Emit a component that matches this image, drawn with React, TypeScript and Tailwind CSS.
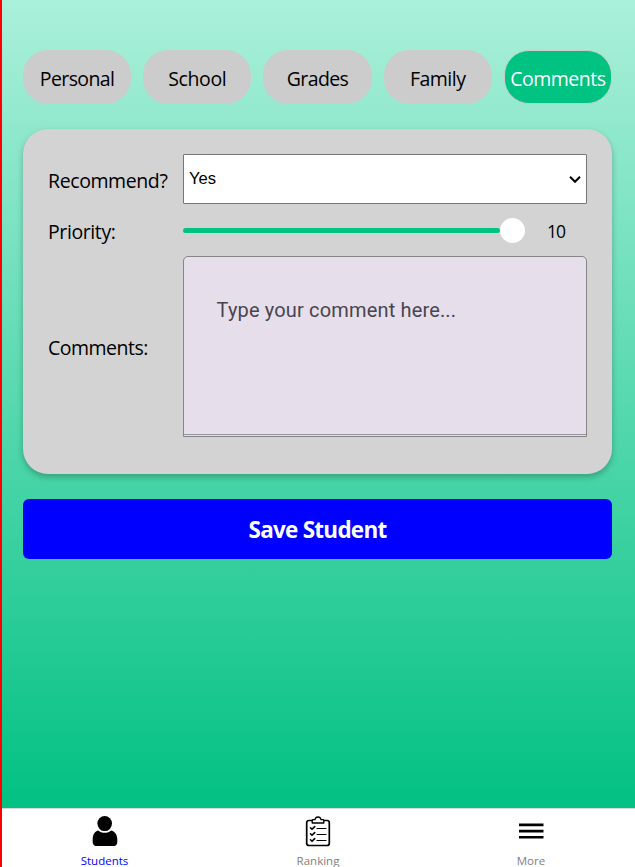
import { useState } from "react";

const tabs = [
  { name: "Personal", tracking: "tracking-[-0.6px]" },
  { name: "School", tracking: "tracking-[-0.35px]" },
  { name: "Grades", tracking: "tracking-[-0.6px]" },
  { name: "Family", tracking: "tracking-[-0.5px]" },
  { name: "Comments", tracking: "tracking-[-0.5px]" },
];

function PersonIcon() {
  return (
    <svg width="26" height="32" viewBox="0 0 26 32" fill="#000">
      <ellipse cx="12.7" cy="8.6" rx="7.3" ry="7.5" />
      <path d="M6.2 15.400c3.600 3.200 9.400 3.200 13 0 4.100 1.100 6.100 4.500 6.100 9.200v2.300c0 2.700-1.500 4.200-4.300 4.200H5c-2.800 0-4.300-1.500-4.300-4.200V24.600c0-4.700 1.500-8.100 5.500-9.200z" />
    </svg>
  );
}

function ClipboardIcon() {
  return (
    <svg width="26" height="32" viewBox="0 0 26 32" fill="none" stroke="#000" strokeLinejoin="round" strokeLinecap="round">
      <path d="M7 5.500H4Q1.700 5.500 1.700 7.800V28.200Q1.700 30.500 4 30.500H22Q24.300 30.500 24.300 28.200V7.800Q24.300 5.500 22 5.500H19" strokeWidth="1.700" />
      <path d="M7.200 8V5.500Q7.200 4.700 8 4.700H10Q10.500 2 13 2T16 4.700H18Q18.800 4.700 18.800 5.500V8Z" strokeWidth="1.300" />
      <path d="M5.500 12.800l1.500 1.500 2.700-2.700M5.500 18.800l1.500 1.500 2.700-2.700M5.500 24.800l1.500 1.500 2.700-2.700" strokeWidth="1.600" />
      <path d="M12 13.500h9M12 19.500h9M12 25.500h9" strokeWidth="1.200" />
    </svg>
  );
}

function MenuIcon() {
  return (
    <svg width="26" height="32" viewBox="0 0 26 32" fill="#000">
      <path d="M1 8.500h24.500v2.700H1zM1 14.700h24.500v2.700H1zM1 20.900h24.500v2.700H1z" />
    </svg>
  );
}

const navItems = [
  { name: "Students", icon: <PersonIcon />, color: "text-[#0000ff]" },
  { name: "Ranking", icon: <ClipboardIcon />, color: "text-[#808080]" },
  { name: "More", icon: <MenuIcon />, color: "text-[#808080]" },
];

const label = "self-center text-[19.5px] leading-[26px]";

export default function App() {
  const [active, setActive] = useState("Comments");

  return (
    <div className="flex h-[867px] flex-col border-l-2 border-[#ff0000] font-['Open_Sans','Noto_Sans',sans-serif] text-black">
      <main className="h-[808px] shrink-0 bg-linear-to-b/srgb from-[#abf0da] to-[#02c182] pt-[50px] pr-[23px] pl-[21px]">
        <div className="grid h-[54px] grid-cols-5 gap-3">
          {tabs.map((t) => (
            <button
              key={t.name}
              onClick={() => setActive(t.name)}
              className={`flex items-center justify-center rounded-[25px] border border-[#cccccc] pt-[3px] text-[19.5px] whitespace-nowrap ${t.tracking} ${
                active === t.name ? "bg-[#00c281] text-white" : "bg-[#cccccc]"
              }`}
            >
              {t.name}
            </button>
          ))}
        </div>

        <section className="mt-[25px] grid h-[345px] grid-cols-[135px_1fr] grid-rows-[50px_52px_181px] rounded-[25px] bg-[#d3d3d3] p-[25px] shadow-[0_3px_6px_rgba(0,0,0,0.25)]">
          <div className={`${label} pt-1 tracking-[-0.4px]`}>Recommend?</div>
          <div className="flex items-center justify-between rounded-[1px] border border-[#767676] bg-white pr-[5px] pl-[5px] font-['Liberation_Sans',Arial,sans-serif] text-[16.6px]">
            <span className="pt-[1px]">Yes</span>
            <svg width="12" height="8" viewBox="0 0 12 8" fill="none" stroke="#000" strokeWidth="2">
              <path d="M1 1.800L6 6.800L11 1.800" />
            </svg>
          </div>

          <div className={`${label} pt-[3px] tracking-[-0.4px]`}>Priority:</div>
          <div className="flex items-center">
            <div className="h-[5px] w-[317px] rounded-full bg-[#00c281]" />
            <div className="h-[25px] w-[25px] rounded-full bg-white" />
            <div className="ml-[22px] pt-[2px] text-[17.5px] tracking-[-0.9px]">10</div>
          </div>

          <div className={`${label} pt-[2px] tracking-[-0.5px]`}>Comments:</div>
          <div className="flex flex-col rounded-t-[5px] border border-[#858585] bg-[#e6dfeb] pb-[1px]">
            <div className="flex-1 border-b border-[#99949e] px-[32.5px] pt-[41px] font-[Roboto,sans-serif] text-[20px] leading-[24px] tracking-[0.16px] text-[#49454f]">
              Type your comment here...
            </div>
          </div>
        </section>

        <button className="mt-[25px] flex h-[60px] w-full items-center justify-center rounded-[6px] bg-[#0000ff] pt-[2px] text-[22.5px] font-bold tracking-[-0.75px] text-white">
          Save Student
        </button>
      </main>

      <nav className="grid h-[59px] shrink-0 grid-cols-[205px_222px_204px] border-t border-[#d8d8d8] bg-white">
        {navItems.map((n) => (
          <div key={n.name} className={`flex flex-col items-center pt-[6px] text-[11.5px] ${n.color}`}>
            {n.icon}
            <span className="mt-[8px] leading-[12px]">{n.name}</span>
          </div>
        ))}
      </nav>
    </div>
  );
}
